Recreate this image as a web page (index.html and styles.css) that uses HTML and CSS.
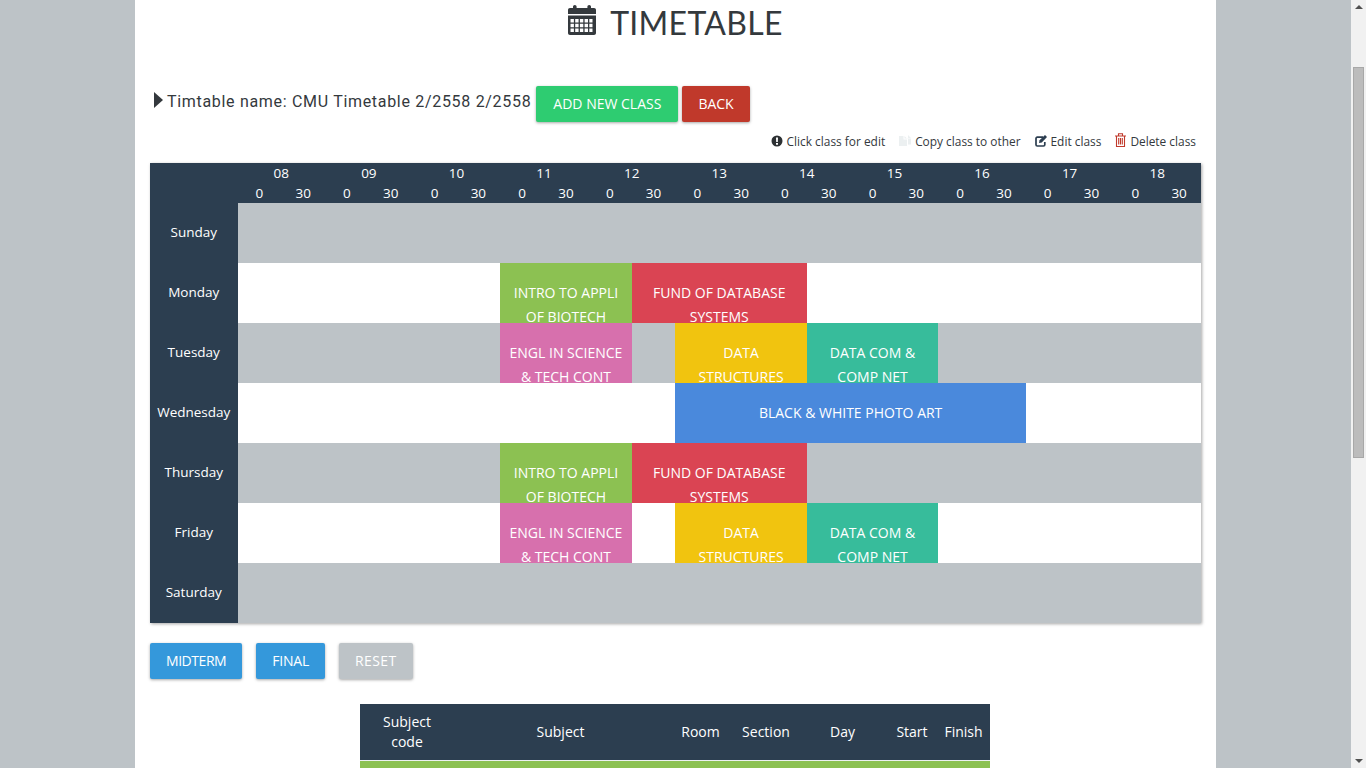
FILE: index.html
```html
<!DOCTYPE html>
<html lang="en">
  <head>
    <title>Timetable</title>
    <meta charset="UTF-8" />
    <meta name="viewport" content="width=device-width, initial-scale=1.0" />
    <link rel="stylesheet" href="styles.css">
  </head>
  <body>
    <div class="viewport">
      <main class="sheet">
        <h1 class="page-title">
          <svg class="title-icon" viewBox="0 0 28 30" aria-hidden="true">
            <path fill="#34393d" d="M0 5C0 3.800.8 3 2 3h3V1.800C5 .8 5.800 0 6.800 0S8.600.8 8.600 1.800V3h10.800V1.800C19.400.8 20.200 0 21.200 0S23 .8 23 1.800V3h3c1.200 0 2 .8 2 2v4H0z"/>
            <path fill="#34393d" fill-rule="evenodd" d="M0 10.500h28V28c0 1.200-.8 2-2 2H2c-1.200 0-2-.8-2-2zM2.500 14v3.400h3.400V14zm4.700 0v3.400h3.400V14zm4.700 0v3.400h3.400V14zm4.700 0v3.400H20V14zm4.700 0v3.400h3.200V14zM2.500 18.800v3.400h3.400v-3.400zm4.700 0v3.400h3.400v-3.400zm4.700 0v3.400h3.400v-3.400zm4.700 0v3.400H20v-3.400zm4.700 0v3.400h3.200v-3.400zM2.500 23.600V27h3.400v-3.400zm4.700 0V27h3.400v-3.400zm4.700 0V27h3.400v-3.400zm4.700 0V27H20v-3.400zm4.700 0V27h3.200v-3.400z"/>
          </svg>
          TIMETABLE
        </h1>

        <div class="name-row">
          <svg class="caret" viewBox="0 0 9 16" aria-hidden="true"><path fill="#34393d" d="M0 0l9 8-9 8z"/></svg>
          <span class="name-text">Timtable name: CMU Timetable 2/2558 2/2558</span>
          <a class="btn btn-green">ADD NEW CLASS</a>
          <a class="btn btn-red">BACK</a>
        </div>

        <div class="legend">
          <span class="legend-item">
            <svg viewBox="0 0 12 12" aria-hidden="true"><path fill="#2c3033" fill-rule="evenodd" d="M6 .5a5.500 5.500 0 1 1 0 11 5.500 5.500 0 0 1 0-11zM5 2.500l.2 4.500h1.600L7 2.500zM5 8v1.700h2V8z"/></svg>
            Click class for edit
          </span>
          <span class="legend-item">
            <svg viewBox="0 0 12 12" aria-hidden="true"><path fill="#ecf0f1" d="M0 1h4.500v3.500H8V11H0zM5.500 1L8 3.500H5.500zM9 0l3 3H9zM8.500 0v4H9v5.500h3V3.500H8.500z"/></svg>
            Copy class to other
          </span>
          <span class="legend-item">
            <svg viewBox="0 0 12 12" aria-hidden="true"><path fill="none" stroke="#2c3e50" stroke-width="1.700" d="M8 2.200H2.300C1.500 2.200 1 2.700 1 3.500v6.200c0 .8.500 1.300 1.300 1.300h6.200c.8 0 1.300-.5 1.300-1.300V7"/><path fill="#2c3e50" d="M10 0L12 2 6.800 7.500 4 8l.5-2.800z"/></svg>
            Edit class
          </span>
          <span class="legend-item">
            <svg class="trash" viewBox="0 0 11 14" aria-hidden="true"><path fill="none" stroke="#c0392b" stroke-width="1.100" d="M0 3h11M3.500 3V.8h4V3M1.500 3v10.500h8V3M3.700 5v6.500M5.500 5v6.500M7.300 5v6.500"/></svg>
            Delete class
          </span>
        </div>

        <section class="timetable">
          <div class="head-corner"></div>
          <div class="hour">08</div><div class="hour">09</div><div class="hour">10</div><div class="hour">11</div>
          <div class="hour">12</div><div class="hour">13</div><div class="hour">14</div><div class="hour">15</div>
          <div class="hour">16</div><div class="hour">17</div><div class="hour">18</div>
          <div class="min">0</div><div class="min">30</div><div class="min">0</div><div class="min">30</div>
          <div class="min">0</div><div class="min">30</div><div class="min">0</div><div class="min">30</div>
          <div class="min">0</div><div class="min">30</div><div class="min">0</div><div class="min">30</div>
          <div class="min">0</div><div class="min">30</div><div class="min">0</div><div class="min">30</div>
          <div class="min">0</div><div class="min">30</div><div class="min">0</div><div class="min">30</div>
          <div class="min">0</div><div class="min">30</div>

          <div class="day">Sunday</div>
          <div class="slot grey span-22"></div>

          <div class="day">Monday</div>
          <div class="slot span-6"></div>
          <div class="slot green span-3">INTRO TO APPLI OF BIOTECH</div>
          <div class="slot red span-4">FUND OF DATABASE SYSTEMS</div>
          <div class="slot span-9"></div>

          <div class="day">Tuesday</div>
          <div class="slot grey span-6"></div>
          <div class="slot pink span-3">ENGL IN SCIENCE &amp; TECH CONT</div>
          <div class="slot grey span-1"></div>
          <div class="slot yellow span-3">DATA STRUCTURES</div>
          <div class="slot teal span-3">DATA COM &amp; COMP NET</div>
          <div class="slot grey span-6"></div>

          <div class="day">Wednesday</div>
          <div class="slot span-10"></div>
          <div class="slot blue span-8">BLACK &amp; WHITE PHOTO ART</div>
          <div class="slot span-4"></div>

          <div class="day">Thursday</div>
          <div class="slot grey span-6"></div>
          <div class="slot green span-3">INTRO TO APPLI OF BIOTECH</div>
          <div class="slot red span-4">FUND OF DATABASE SYSTEMS</div>
          <div class="slot grey span-9"></div>

          <div class="day">Friday</div>
          <div class="slot span-6"></div>
          <div class="slot pink span-3">ENGL IN SCIENCE &amp; TECH CONT</div>
          <div class="slot span-1"></div>
          <div class="slot yellow span-3">DATA STRUCTURES</div>
          <div class="slot teal span-3">DATA COM &amp; COMP NET</div>
          <div class="slot span-6"></div>

          <div class="day">Saturday</div>
          <div class="slot grey span-22"></div>
        </section>

        <div class="exam-row">
          <a class="btn btn-blue btn-tight">MIDTERM</a>
          <a class="btn btn-blue">FINAL</a>
          <a class="btn btn-grey">RESET</a>
        </div>

        <table class="class-list">
          <thead>
            <tr>
              <th class="col-code">Subject code</th>
              <th class="col-subject">Subject</th>
              <th class="col-room">Room</th>
              <th class="col-section">Section</th>
              <th class="col-day">Day</th>
              <th class="col-start">Start</th>
              <th class="col-finish">Finish</th>
            </tr>
          </thead>
          <tbody>
            <tr class="list-row"><td colspan="7"></td></tr>
          </tbody>
        </table>
      </main>

      <div class="scrollbar">
        <span class="arrow arrow-up"></span>
        <span class="thumb"></span>
        <span class="arrow arrow-down"></span>
      </div>
    </div>
  </body>
</html>
```

FILE: styles.css
```css
* {
  box-sizing: border-box;
}
body {
  margin: 0;
  font-family: "Open Sans", Arial, sans-serif;
  font-size: 14px;
  color: #34393d;
}
.viewport {
  display: flex;
  height: 100vh;
  overflow: hidden;
  background-color: #bdc3c7;
}
.sheet {
  width: 1081px;
  height: 100%;
  margin-left: 135px;
  margin-right: 135px;
  padding: 0 15px;
  background-color: #fff;
  overflow: hidden;
  flex: none;
}

.page-title {
  display: flex;
  justify-content: center;
  align-items: center;
  gap: 14px;
  height: 44px;
  margin: 0;
  font-family: Lato, sans-serif;
  font-size: 32px;
  font-weight: 400;
  letter-spacing: 0.3px;
}
.title-icon {
  width: 28px;
  height: 30px;
  margin-bottom: 4px;
}

.name-row {
  display: flex;
  align-items: flex-start;
  height: 46px;
  margin-top: 42px;
  padding-left: 4px;
}
.caret {
  width: 9px;
  height: 16px;
  margin-top: 6px;
}
.name-text {
  margin-left: 4px;
  margin-right: 5px;
  font-family: Roboto, sans-serif;
  font-size: 16px;
  line-height: 31px;
  letter-spacing: 0.69px;
}
.btn {
  display: inline-block;
  height: 36px;
  padding: 0 16px;
  border-radius: 2px;
  color: #fff;
  font-size: 14px;
  line-height: 36px;
  box-shadow: 0 1px 3px rgba(0, 0, 0, 0.35);
}
.btn-green {
  padding: 0 17px;
  background-color: #2ecc71;
}
.btn-red {
  margin-left: 4px;
  background-color: #c0392b;
}
.btn-blue {
  background-color: #3498db;
  letter-spacing: -0.2px;
}
.btn-grey {
  background-color: #bdc3c7;
  letter-spacing: 0.4px;
}
.btn-tight {
  letter-spacing: -0.45px;
}

.legend {
  display: flex;
  justify-content: flex-end;
  gap: 14px;
  height: 31px;
  padding-right: 5px;
  font-size: 11.9px;
  line-height: 18px;
}
.legend-item {
  display: flex;
  align-items: center;
  gap: 4px;
  height: 18px;
}
.legend-item svg {
  width: 12px;
  height: 12px;
}
.legend-item .trash {
  width: 11px;
  height: 14px;
  margin-top: -2px;
}

.timetable {
  display: grid;
  grid-template-columns: 87.5px repeat(22, 1fr);
  grid-template-rows: 20px 20px repeat(7, 60px);
  width: 1051px;
  color: #fff;
  font-size: 14px;
  box-shadow: 1px 1px 3px rgba(0, 0, 0, 0.35);
}
.head-corner {
  grid-row: span 2;
  background-color: #2c3e50;
}
.hour {
  grid-column: span 2;
  background-color: #2c3e50;
  font-size: 13.5px;
  text-align: center;
  line-height: 20px;
}
.min {
  background-color: #2c3e50;
  font-size: 13.5px;
  text-align: center;
  line-height: 20px;
}
.day {
  padding-top: 17px;
  background-color: #2c3e50;
  font-size: 13.5px;
  text-align: center;
  line-height: 24px;
}
.slot {
  min-width: 0;
  padding: 17.5px 8px 0;
  overflow: hidden;
  text-align: center;
  line-height: 24px;
}
.grey {
  background-color: #bdc3c7;
}
.green {
  background-color: #8cc152;
}
.red {
  background-color: #da4453;
}
.pink {
  background-color: #d770ad;
}
.yellow {
  background-color: #f1c40f;
}
.teal {
  background-color: #37bc9b;
}
.blue {
  background-color: #4a89dc;
}
.span-1 { grid-column: span 1; }
.span-3 { grid-column: span 3; }
.span-4 { grid-column: span 4; }
.span-6 { grid-column: span 6; }
.span-8 { grid-column: span 8; }
.span-9 { grid-column: span 9; }
.span-10 { grid-column: span 10; }
.span-22 { grid-column: span 22; }

.exam-row {
  display: flex;
  gap: 14px;
  margin-top: 20px;
}

.class-list {
  width: 630px;
  margin: 25px 0 0 210px;
  border-collapse: collapse;
  table-layout: fixed;
  color: #fff;
  font-size: 14px;
}
.class-list th {
  height: 56px;
  padding: 0 4px;
  background-color: #2c3e50;
  font-weight: 500;
  line-height: 20px;
}
.class-list .col-code { width: 94px; padding: 0 14px; }
.col-subject { width: 213px; }
.col-room { width: 67px; }
.col-section { width: 64px; }
.col-day { width: 89px; }
.col-start { width: 50px; }
.col-finish { width: 53px; }
.list-row td {
  height: 40px;
  border-top: 1px solid #ecf0f1;
  background-color: #8cc152;
}

.scrollbar {
  position: relative;
  flex: none;
  width: 15px;
  height: 100%;
  background-color: #f1f1f1;
}
.thumb {
  position: absolute;
  top: 67px;
  left: 2px;
  width: 11px;
  height: 391px;
  border: 1px solid #a8a8a8;
  background-color: #bcbcbc;
}
.arrow {
  position: absolute;
  left: 4px;
  width: 0;
  height: 0;
  border-left: 4px solid transparent;
  border-right: 4px solid transparent;
}
.arrow-up {
  top: 5px;
  border-bottom: 4px solid #505050;
}
.arrow-down {
  bottom: 5px;
  border-top: 4px solid #505050;
}
```
